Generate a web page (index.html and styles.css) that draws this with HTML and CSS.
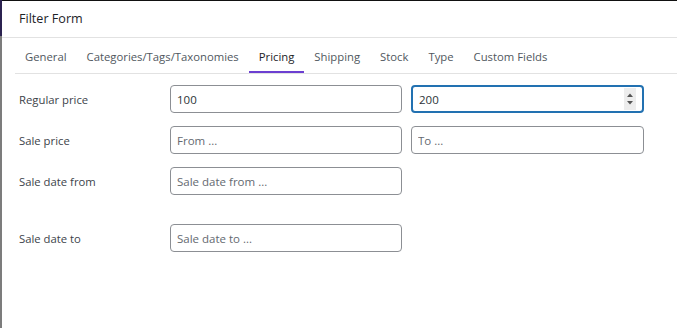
FILE: index.html
```html
<html lang="en">
<head>
    <meta charset="UTF-8">
    <meta name="viewport" content="width=device-width, initial-scale=1.0">
    <title>Filter Form</title>
    <link rel="stylesheet" href="styles.css">
</head>
<body>
    <div class="side-strip"></div>
    <div class="modal">
        <div class="modal-header">Filter Form</div>
        <div class="tab-bar">
            <div class="tab">General</div>
            <div class="tab">Categories/Tags/Taxonomies</div>
            <div class="tab tab-active">Pricing</div>
            <div class="tab">Shipping</div>
            <div class="tab">Stock</div>
            <div class="tab">Type</div>
            <div class="tab">Custom Fields</div>
        </div>
        <div class="form-body">
            <div class="form-row">
                <label class="form-label">Regular price</label>
                <input class="form-input" type="text" value="100">
                <div class="form-input number-input focused">
                    <span>200</span>
                    <span class="spinner">
                        <svg width="8" height="18" viewBox="0 0 8 18">
                            <path d="M1 7 L4 3.5 L7 7 Z" fill="#555"/>
                            <path d="M1 11 L4 14.5 L7 11 Z" fill="#555"/>
                        </svg>
                    </span>
                </div>
            </div>
            <div class="form-row">
                <label class="form-label">Sale price</label>
                <input class="form-input" type="text" placeholder="From ...">
                <input class="form-input" type="text" placeholder="To ...">
            </div>
            <div class="form-row row-tall">
                <label class="form-label">Sale date from</label>
                <input class="form-input" type="text" placeholder="Sale date from ...">
            </div>
            <div class="form-row">
                <label class="form-label">Sale date to</label>
                <input class="form-input" type="text" placeholder="Sale date to ...">
            </div>
        </div>
    </div>
</body>
</html>
```

FILE: styles.css
```css
body {
    margin: 0px;
    display: flex;
    height: 328px;
    overflow: hidden;
    font-family: "Segoe UI", "Open Sans", "Noto Sans", sans-serif;
    background-color: white;
}

.side-strip {
    width: 2px;
    flex-shrink: 0;
    background: linear-gradient(#2b2250 0px, #2b2250 36px, #7c7c7c 36px);
}

.modal {
    flex: 1;
    border-top: 1px solid #111;
}

.modal-header {
    height: 37px;
    box-sizing: border-box;
    padding: 9px 0px 0px 17px;
    font-size: 12.6px;
    color: #1d2327;
    border-bottom: 1px solid #e2e2e2;
}

.tab-bar {
    display: flex;
    margin-left: 13px;
    border-bottom: 1px solid #e2e2e2;
}

.tab {
    padding: 11px 10px 0px 10px;
    height: 35px;
    box-sizing: border-box;
    font-size: 11.3px;
    color: #50575e;
    border-bottom: 2px solid transparent;
}

.tab-active {
    color: #1d2327;
    border-bottom-color: #6c3fd1;
}

.form-body {
    padding: 11px 0px 0px 17px;
}

.form-row {
    display: grid;
    grid-template-columns: 142px 232px 233px;
    column-gap: 9px;
    align-items: center;
    margin-bottom: 13px;
}

.row-tall {
    margin-bottom: 29px;
}

.form-label {
    font-size: 11.3px;
    color: #3c434a;
}

.form-input {
    height: 28px;
    box-sizing: border-box;
    border: 1px solid #8c8f94;
    border-radius: 4px;
    padding: 0px 6px;
    font-family: inherit;
    font-size: 11.5px;
    color: #2c3338;
    outline: none;
}

.form-input::placeholder {
    color: #646970;
}

.number-input {
    display: flex;
    align-items: center;
    justify-content: space-between;
    padding-right: 6px;
}

.focused {
    border: 2px solid #2271b1;
    padding-left: 6px;
}

.spinner {
    width: 12px;
    height: 22px;
    background-color: #ededed;
    display: flex;
    align-items: center;
    justify-content: center;
}
```
